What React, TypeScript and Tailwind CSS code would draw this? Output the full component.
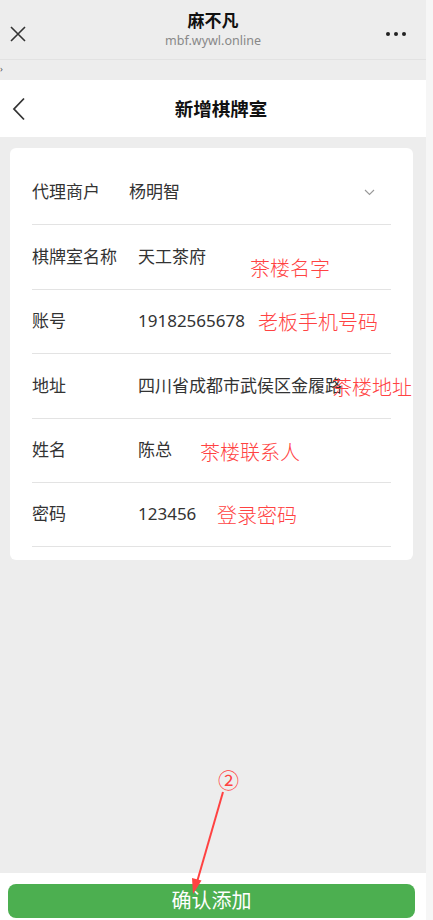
import React from 'react';

const font = { fontFamily: '"Noto Sans", "Noto Sans CJK SC", sans-serif' };

interface Row {
    label: string;
    value: string;
    note?: string;
    noteClass?: string;
    select?: boolean;
}

const rows: Row[] = [
    { label: '代理商户', value: '杨明智', select: true },
    { label: '棋牌室名称', value: '天工茶府', note: '茶楼名字', noteClass: 'left-[218px] top-[31px]' },
    { label: '账号', value: '19182565678', note: '老板手机号码', noteClass: 'left-[226px] top-[20px]' },
    { label: '地址', value: '四川省成都市武侯区金履路', note: '茶楼地址', noteClass: 'left-[300px] top-[21px]' },
    { label: '姓名', value: '陈总', note: '茶楼联系人', noteClass: 'left-[168px] top-[21px]' },
    { label: '密码', value: '123456', note: '登录密码', noteClass: 'left-[185px] top-[20px]' },
];

function FormRow({ row }: { row: Row }) {
    return (
        <div className="relative flex h-[64.4px] items-center border-b border-[#e3e3e3] text-[17px] text-[#333]">
            <span className={row.select ? 'w-[97px] -mt-[1px]' : 'w-[106px] -mt-[1px]'}>{row.label}</span>
            <span className="flex-1 -mt-[1px] whitespace-nowrap">{row.value}</span>
            {row.select && (
                <svg width="11" height="7" viewBox="0 0 11 7" className="mr-[16px]">
                    <path d="M1 1l4.5 4.5L10 1" fill="none" stroke="#999" strokeWidth="1.1" />
                </svg>
            )}
            {row.note && (
                <span className={`absolute whitespace-nowrap text-[20px] leading-[26px] font-light text-[#ff4242] ${row.noteClass}`}>
                    {row.note}
                </span>
            )}
        </div>
    );
}

export default function App() {
    return (
        <div className="relative flex h-[920px] w-[433px] overflow-hidden bg-[#f6f6f6]" style={font}>
            <div className="flex w-[426px] flex-col bg-[#ededed]">
                {/* wechat top bar */}
                <div className="relative flex h-[60px] shrink-0 flex-col items-center justify-center border-b border-[#e2e2e2]">
                    <svg width="16" height="16" viewBox="0 0 16 16" className="absolute left-[10px] top-[26px]">
                        <path d="M1 1l14 14M15 1L1 15" stroke="#333" strokeWidth="1.6" />
                    </svg>
                    <span className="text-[17px] font-bold leading-[22px] text-[#111] mt-[1px]">麻不凡</span>
                    <span className="text-[12.5px] leading-[18px] text-[#888]">mbf.wywl.online</span>
                    <div className="absolute right-[20px] top-[32px] flex gap-[4px]">
                        <span className="h-[4px] w-[4px] rounded-full bg-[#222]" />
                        <span className="h-[4px] w-[4px] rounded-full bg-[#222]" />
                        <span className="h-[4px] w-[4px] rounded-full bg-[#222]" />
                    </div>
                </div>
                <div className="h-[20px] shrink-0 pt-[4px] text-[9px] leading-[9px] text-[#555]">›</div>

                {/* page nav */}
                <div className="relative flex h-[57px] shrink-0 items-center justify-center bg-white">
                    <svg width="14" height="24" viewBox="0 0 14 24" className="absolute left-[12px] top-[17px]">
                        <path d="M12 1.5L2 12l10 10.5" fill="none" stroke="#333" strokeWidth="1.8" />
                    </svg>
                    <span className="ml-[16px] text-[18.5px] font-bold text-[#111]">新增棋牌室</span>
                </div>

                {/* form */}
                <div className="flex-1 pl-[10px] pr-[13px] pt-[11px]">
                    <div className="rounded-[6px] bg-white px-[22px] pt-[13px] pb-[13px]">
                        {rows.map((r) => (
                            <FormRow key={r.label} row={r} />
                        ))}
                    </div>
                </div>

                {/* footer button */}
                <div className="flex h-[47px] shrink-0 items-start bg-white px-[8px] pt-[11px]">
                    <button className="flex h-[34px] w-[407px] items-center justify-center rounded-[8px] bg-[#4caf50] text-[20px] text-white">
                        确认添加
                    </button>
                </div>
            </div>

            {/* annotation arrow */}
            <span className="absolute left-[218px] top-[767px] text-[21px] leading-[26px] text-[#ff4242]">②</span>
            <svg width="433" height="920" className="pointer-events-none absolute left-0 top-0">
                <line x1="223" y1="792" x2="197" y2="882" stroke="#ff4242" strokeWidth="2" />
                <polygon points="193,894 201.5,880.5 192,878" fill="#ff4242" />
            </svg>
        </div>
    );
}
